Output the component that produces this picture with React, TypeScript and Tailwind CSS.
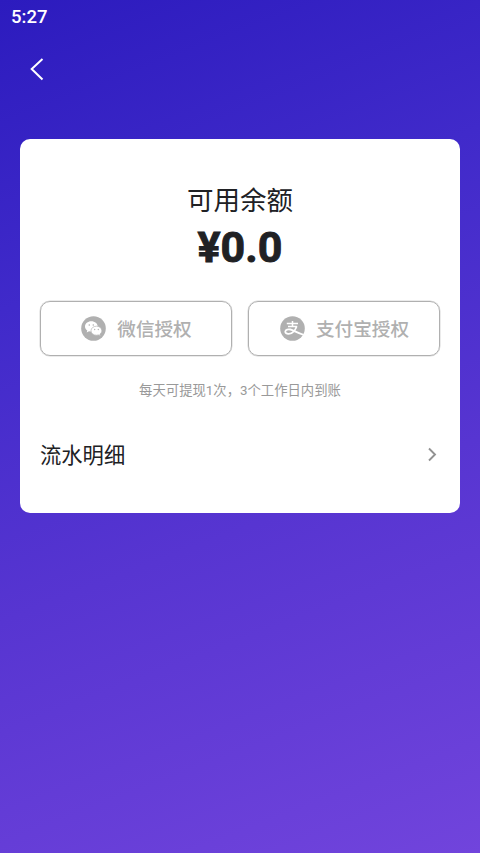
function WechatIcon() {
  return (
    <svg className="ml-px block size-[25px] shrink-0" viewBox="0 0 25 25">
      <circle cx="12.5" cy="12.5" r="12.3" fill="#b0b0b0" />
      <path d="M10.3 5.3C6.7 5.3 4 7.6 4 10.5c0 1.7.9 3.1 2.3 4l-.6 2 2.3-1.2c.7.2 1.5.3 2.3.3 3.6 0 6.400-2.300 6.400-5.100s-2.800-5.200-6.400-5.200Z" fill="#fff" />
      <path d="M15.500 10.200c-3.100 0-5.500 2-5.500 4.500s2.400 4.500 5.500 4.500c.7 0 1.400-.1 2-.3l1.900 1-.5-1.800c1.200-.8 1.900-2 1.900-3.400 0-2.500-2.300-4.500-5.300-4.500Z" fill="#fff" stroke="#b0b0b0" strokeWidth=".65" />
      <g fill="#b0b0b0"><circle cx="8.3" cy="9" r=".8" /><circle cx="12.3" cy="9" r=".8" /><circle cx="13.7" cy="13.5" r=".65" /><circle cx="17.3" cy="13.5" r=".65" /></g>
    </svg>
  );
}

function AlipayIcon() {
  return (
    <svg className="ml-px block size-[25px] shrink-0" viewBox="0 0 25 25" fill="none" stroke="#fff">
      <circle cx="12.5" cy="12.5" r="12.3" fill="#b0b0b0" stroke="none" />
      <path d="M12.5 5V10M6.8 7.5H18M8 10.4H16.9" strokeWidth="1.5" />
      <path d="M16.700 10.300C15.600 13.600 12.600 17.800 8.700 17.900C6.500 18 5.200 17 5.300 15.500C5.500 13.500 8.200 13 10.400 13.500C13.400 14.200 17.700 17.200 23.700 18.800" strokeWidth="1.8" />
    </svg>
  );
}

export default function App() {
  return (
    <main className="h-[853px] w-[480px] overflow-hidden bg-[linear-gradient(159deg,#2c1bbe_0%,#402aca_30%,#5735d1_60%,#7144dc_100%)] font-['Roboto','Noto_Sans_CJK_SC',sans-serif]">
      <header className="flex h-[34px] items-center pt-px pl-[11px] text-[18.5px] font-medium text-white">5:27</header>
      <button className="mt-[23px] ml-[29px] block text-white" aria-label="返回">
        <svg className="block" width="16" height="24" viewBox="0 0 16 24" fill="none" stroke="currentColor" strokeWidth="2"><path d="M13.5 2L2.7 12L13.5 22.5" /></svg>
      </button>
      <section className="mx-5 mt-[58px] flex h-[374px] flex-col rounded-[10px] bg-white px-5 text-[#202124]">
        <h1 className="mt-[42px] text-center text-[26.5px] leading-[40px]">可用余额</h1>
        <div className="text-center text-[43px] leading-[52px] font-bold [-webkit-text-stroke:0.9px_#202124]">¥0.0</div>
        <div className="mt-[28px] grid grid-cols-2 gap-4 text-[18.6px] font-medium text-[#b0b0b0]">
          <button className="flex h-[55px] items-center justify-center gap-[11px] rounded-[10px] border-[1.5px] border-[#b0b0b0] shadow-[0_0_0_0.5px_#b0b0b080]">
            <WechatIcon /><span className="pt-[5px]">微信授权</span>
          </button>
          <button className="flex h-[55px] items-center justify-center gap-[11px] rounded-[10px] border-[1.5px] border-[#b0b0b0] shadow-[0_0_0_0.5px_#b0b0b080]">
            <AlipayIcon /><span className="pt-[5px]">支付宝授权</span>
          </button>
        </div>
        <p className="mt-[25px] text-center text-[13.35px] leading-5 text-[#999]">每天可提现1次，3个工作日内到账</p>
        <button className="mt-[38px] flex h-[32px] items-center justify-between text-[21.3px]">
          <span className="pt-[2px]">流水明细</span>
          <svg className="mr-[3px]" width="10" height="16" viewBox="0 0 10 16" fill="none" stroke="#929292" strokeWidth="1.9"><path d="M2 1.5L8 7.5L2 13.5" /></svg>
        </button>
      </section>
    </main>
  );
}
